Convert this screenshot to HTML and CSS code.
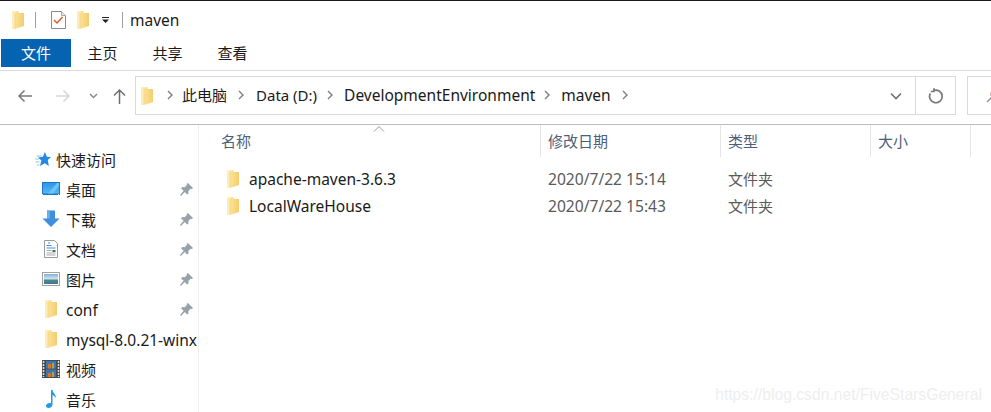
FILE: index.html
```html
<!DOCTYPE html>
<html lang="en">
<head>
    <meta charset="UTF-8">
    <meta name="viewport" content="width=device-width, initial-scale=1.0">
    <title>maven</title>
    <link rel="stylesheet" href="styles.css">
</head>
<body>
    <svg class="defs" width="0" height="0">
        <defs>
            <linearGradient id="folder-fill" x1="0" y1="0" x2="1" y2="0">
                <stop offset="0" stop-color="#fde9a8"/>
                <stop offset="1" stop-color="#f4cd6c"/>
            </linearGradient>
            <linearGradient id="desk-fill" x1="0" y1="0" x2="0" y2="1">
                <stop offset="0" stop-color="#2f95e8"/>
                <stop offset="1" stop-color="#54b8f6"/>
            </linearGradient>
            <linearGradient id="pic-fill" x1="0" y1="0" x2="0" y2="1">
                <stop offset="0" stop-color="#7fb2d8"/>
                <stop offset=".5" stop-color="#d2e4ee"/>
                <stop offset=".6" stop-color="#4f8a7c"/>
                <stop offset="1" stop-color="#3a78a8"/>
            </linearGradient>
            <symbol id="folder" viewBox="0 0 12 18">
                <path d="M0 0h6l1 2h5v13L3 18H0z" fill="url(#folder-fill)"/>
                <path d="M0 0h5.500L3 2v14l-1 2H0z" fill="#fdedb6"/>
                <path d="M3 2v15" stroke="#efcf7e" stroke-width=".6"/>
            </symbol>
            <symbol id="pin" viewBox="0 0 14 14">
                <path d="M8.500 0L14 5.500l-1.200 1-1.300-.4-2.500 2.500.2 2.700-1.500 1.200-2.600-2.700L1 14l-1-1 3.900-4.600L1.200 5.800l1.200-1.500 2.700.2 2.500-2.500-.4-1.300z" fill="#98a2ab"/>
            </symbol>
        </defs>
    </svg>

    <div class="titlebar">
        <svg class="icon-folder"><use href="#folder"/></svg>
        <span class="title-sep sep-first"></span>
        <svg class="icon-check" viewBox="0 0 15 18">
            <path d="M.5.5h10l4 4v13H.5z" fill="#fff" stroke="#8c8c8c"/>
            <path d="M10.500.5v4h4" fill="#e8e8e8" stroke="#a8a8a8"/>
            <path d="M3 9l3 3 5.500-6" fill="none" stroke="#e4562a" stroke-width="1.500"/>
        </svg>
        <svg class="icon-folder folder-qat"><use href="#folder"/></svg>
        <svg class="icon-drop" viewBox="0 0 7 6">
            <path d="M0 0h7v1H0zM0 2.500h7L3.500 6z" fill="#222"/>
        </svg>
        <span class="title-sep sep-last"></span>
        <span class="title-text">maven</span>
    </div>

    <div class="tabs">
        <div class="tab tab-file">文件</div>
        <div class="tab">主页</div>
        <div class="tab">共享</div>
        <div class="tab">查看</div>
    </div>

    <div class="navbar">
        <div class="nav-buttons">
            <svg class="nav-arrow" viewBox="0 0 16 14"><path d="M15 7H2M7.500 1.500L2 7l5.500 5.500" fill="none" stroke="#7a7a7a" stroke-width="1.500"/></svg>
            <svg class="nav-arrow nav-fwd" viewBox="0 0 16 14"><path d="M1 7h13M8.500 1.500L14 7l-5.500 5.500" fill="none" stroke="#d6d6d6" stroke-width="1.500"/></svg>
            <svg class="nav-recent" viewBox="0 0 9 6"><path d="M1 1l3.500 3.500L8 1" fill="none" stroke="#8a8a8a" stroke-width="1.500"/></svg>
            <svg class="nav-up" viewBox="0 0 13 16"><path d="M6.500 16V2M1 7.500L6.500 2 12 7.500" fill="none" stroke="#6f6f6f" stroke-width="1.500"/></svg>
        </div>
        <div class="address">
            <svg class="icon-folder"><use href="#folder"/></svg>
            <div class="crumbs">
                <svg class="chev" viewBox="0 0 6 10"><path d="M1 1l4 4-4 4" fill="none" stroke="#7d7d7d" stroke-width="1.400"/></svg>
                <span class="crumb-cjk">此电脑</span>
                <svg class="chev" viewBox="0 0 6 10"><path d="M1 1l4 4-4 4" fill="none" stroke="#7d7d7d" stroke-width="1.400"/></svg>
                <span class="crumb-data">Data (D:)</span>
                <svg class="chev" viewBox="0 0 6 10"><path d="M1 1l4 4-4 4" fill="none" stroke="#7d7d7d" stroke-width="1.400"/></svg>
                <span class="crumb-dev">DevelopmentEnvironment</span>
                <svg class="chev" viewBox="0 0 6 10"><path d="M1 1l4 4-4 4" fill="none" stroke="#7d7d7d" stroke-width="1.400"/></svg>
                <span>maven</span>
                <svg class="chev" viewBox="0 0 6 10"><path d="M1 1l4 4-4 4" fill="none" stroke="#7d7d7d" stroke-width="1.400"/></svg>
            </div>
            <div class="addr-drop">
                <svg viewBox="0 0 12 8" width="12" height="8"><path d="M1 1.500l5 5 5-5" fill="none" stroke="#6e6e6e" stroke-width="1.600"/></svg>
            </div>
            <div class="addr-refresh">
                <svg viewBox="0 0 16 16" width="16" height="16"><path d="M5.500 2.600A6.300 6.300 0 1 1 2.300 5.500M6 .2v3.300H2.800" fill="none" stroke="#777" stroke-width="1.700"/></svg>
            </div>
        </div>
        <div class="search">
            <svg viewBox="0 0 14 14" width="14" height="14"><circle cx="9" cy="5" r="4" fill="none" stroke="#b3917c" stroke-width="1.300"/><path d="M6 8l-5 5" stroke="#8c8f9c" stroke-width="1.300"/></svg>
        </div>
    </div>

    <div class="main">
        <aside class="sidebar">
            <div class="side-head">
                <svg class="side-star" viewBox="0 0 16 15"><path d="M10 0l1.800 4.800 4.200.3-3.200 3 1 5.900-4-2.700L5 14l1.400-5.400L3 5.500l4.800-.7z" fill="#2489e0"/><path d="M1.500 4h5M0 7h4M.5 10h4M2 13h2.500" stroke="#8fc3ef"/></svg>
                <span>快速访问</span>
            </div>
            <div class="side-item">
                <svg class="side-icon" viewBox="0 0 18 14"><rect width="18" height="13" fill="#1b76c8"/><rect x="1" y="1" width="16" height="10.500" fill="url(#desk-fill)"/><path d="M6 11.500L15 1h2v3l-6 7.500z" fill="#6cc4f8"/><path d="M0 12.500h18" stroke="#d6ecfb" stroke-dasharray="1 15"/></svg>
                <span class="side-label">桌面</span>
                <svg class="pin"><use href="#pin"/></svg>
            </div>
            <div class="side-item">
                <svg class="side-icon" viewBox="0 0 18 18"><path d="M5 .5h8v8h4.500L9 17 .5 8.500H5z" fill="#3f8fdc"/><path d="M5 .5h3v8H5z" fill="#6aaee8"/></svg>
                <span class="side-label">下载</span>
                <svg class="pin"><use href="#pin"/></svg>
            </div>
            <div class="side-item">
                <svg class="side-icon" viewBox="0 0 18 18"><path d="M2.500.5h10l3 3v14h-13z" fill="#fff" stroke="#9a9a9a"/><path d="M6 3h2M4.500 5.500h5M4.500 8h9" stroke="#3f8fdc"/><path d="M4.500 10.500h5M4.500 13h9M4.500 15h9" stroke="#a9a9a9"/><path d="M10.500 10h3v2h-3z" fill="#44705e"/></svg>
                <span class="side-label">文档</span>
                <svg class="pin"><use href="#pin"/></svg>
            </div>
            <div class="side-item">
                <svg class="side-icon" viewBox="0 0 18 14"><rect x=".5" y=".5" width="17" height="13" fill="#fff" stroke="#a0a0a0"/><rect x="2" y="2" width="14" height="10" fill="url(#pic-fill)"/></svg>
                <span class="side-label">图片</span>
                <svg class="pin"><use href="#pin"/></svg>
            </div>
            <div class="side-item">
                <svg class="side-icon icon-folder"><use href="#folder"/></svg>
                <span class="side-label side-latin">conf</span>
                <svg class="pin"><use href="#pin"/></svg>
            </div>
            <div class="side-item">
                <svg class="side-icon icon-folder"><use href="#folder"/></svg>
                <span class="side-label side-latin">mysql-8.0.21-winx</span>
            </div>
            <div class="side-item">
                <svg class="side-icon" viewBox="0 0 18 18"><rect width="18" height="18" fill="#4a4a4a"/><path d="M1.500 1v16M16.500 1v16" stroke="#ddd" stroke-width="1.500" stroke-dasharray="2 1"/><rect x="4" y="1" width="10" height="7.500" fill="#3f74b8"/><rect x="4" y="9.500" width="10" height="7.500" fill="#3f74b8"/><path d="M6 4h3v4.500H6zM6 13h3v4H6z" fill="#d2772e"/><path d="M10 3h2v5.500h-2zM10 12h2v5h-2z" fill="#b8a33a"/></svg>
                <span class="side-label">视频</span>
            </div>
            <div class="side-item">
                <svg class="side-icon" viewBox="0 0 18 18"><path d="M9 0h1.500c.3 3 3.500 4 3.500 8-1-1.500-2-2.500-3.500-3v9.500c0 2-2 3.500-4 3.500-1.500 0-2.500-1-2.500-2 0-2 2.500-3.200 5-2.800z" fill="#1e9be8"/></svg>
                <span class="side-label">音乐</span>
            </div>
        </aside>

        <section class="files">
            <div class="file-head">
                <svg class="sort-arrow" viewBox="0 0 12 6"><path d="M1 5.500l5-5 5 5" fill="none" stroke="#9a9a9a"/></svg>
                <div class="col col-name">名称</div>
                <div class="col col-date">修改日期</div>
                <div class="col col-type">类型</div>
                <div class="col col-size">大小</div>
            </div>
            <div class="file-row">
                <div class="cell-name"><svg class="icon-folder"><use href="#folder"/></svg><span>apache-maven-3.6.3</span></div>
                <div class="cell cell-date">2020/7/22 15:14</div>
                <div class="cell">文件夹</div>
            </div>
            <div class="file-row">
                <div class="cell-name"><svg class="icon-folder"><use href="#folder"/></svg><span>LocalWareHouse</span></div>
                <div class="cell cell-date">2020/7/22 15:43</div>
                <div class="cell">文件夹</div>
            </div>
        </section>
    </div>

    <div class="watermark">https://blog.csdn.net/FiveStarsGeneral</div>
</body>
</html>
```

FILE: styles.css
```css
* {
    box-sizing: border-box;
}
body {
    margin: 0;
    width: 991px;
    height: 412px;
    overflow: hidden;
    position: relative;
    background-color: white;
    color: #1a1a1a;
    font-family: "Noto Sans", "Noto Sans CJK SC", sans-serif;
    font-size: 15px;
    border-top: 1px solid #1a1a1a;
}
svg {
    display: block;
    flex: none;
}
.defs {
    position: absolute;
}
.icon-folder {
    width: 12px;
    height: 18px;
}

/* title bar */
.titlebar {
    display: flex;
    align-items: center;
    height: 38px;
    padding-left: 12px;
}
.title-sep {
    width: 1px;
    height: 16px;
    background-color: #a0a0a0;
}
.sep-first {
    margin-left: 11px;
}
.icon-check {
    width: 15px;
    height: 18px;
    margin-left: 15px;
}
.folder-qat {
    margin-left: 11px;
}
.icon-drop {
    width: 7px;
    height: 6px;
    margin-left: 13px;
}
.sep-last {
    margin-left: 13px;
}
.title-text {
    margin-left: 7px;
    font-size: 15.5px;
}

/* ribbon tabs */
.tabs {
    display: flex;
    height: 32px;
    padding-left: 1px;
    border-bottom: 1px solid #dadada;
}
.tab {
    width: 65px;
    height: 28px;
    line-height: 29px;
    text-align: center;
}
.tab-file {
    width: 70px;
    margin-right: -1px;
    background-color: #0563b1;
    color: white;
}

/* navigation row */
.navbar {
    display: flex;
    height: 54px;
    padding-top: 5px;
    border-bottom: 1px solid #bdbdbd;
}
.nav-buttons {
    display: flex;
    flex: none;
    align-items: center;
    width: 135px;
    height: 39px;
    padding-left: 17px;
}
.nav-arrow {
    width: 16px;
    height: 14px;
}
.nav-fwd {
    margin-left: 22px;
}
.nav-recent {
    width: 9px;
    height: 6px;
    margin-left: 18px;
}
.nav-up {
    width: 13px;
    height: 16px;
    margin-left: 15px;
}
.address {
    display: flex;
    flex: none;
    align-items: center;
    width: 821px;
    height: 39px;
    padding-left: 5px;
    border: 1px solid #d9d9d9;
}
.crumbs {
    display: flex;
    align-items: center;
    flex: 1;
    margin-left: 14px;
    margin-top: -2px;
    font-size: 15.5px;
}
.crumbs span {
    margin: 0 11px;
}
.crumbs .crumb-cjk {
    margin-left: 9px;
    font-size: 15px;
}
.crumbs .crumb-data {
    margin-left: 12px;
    margin-right: 10px;
    font-size: 15px;
}
.crumbs .crumb-dev {
    margin-right: 9px;
}
.chev {
    width: 6px;
    height: 10px;
}
.addr-drop {
    display: flex;
    align-items: center;
    justify-content: center;
    width: 39px;
    height: 100%;
    border-right: 1px solid #d9d9d9;
}
.addr-refresh {
    display: flex;
    align-items: center;
    justify-content: center;
    width: 39px;
}
.search {
    display: flex;
    flex: none;
    align-items: center;
    width: 24px;
    height: 39px;
    margin-left: 11px;
    padding-left: 18px;
    border: 1px solid #d9d9d9;
    border-right: none;
}

/* left pane */
.main {
    display: flex;
    height: 287px;
}
.sidebar {
    flex: none;
    width: 199px;
    height: 287px;
    overflow: hidden;
    padding-top: 19px;
    border-right: 1px solid #eeeeee;
}
.side-head {
    display: flex;
    align-items: center;
    height: 30px;
    padding-left: 35px;
}
.side-star {
    width: 16px;
    height: 15px;
    margin-right: 5px;
}
.side-item {
    display: flex;
    align-items: center;
    height: 30px;
    padding-left: 42px;
    position: relative;
}
.side-icon {
    width: 18px;
    height: 18px;
}
.side-icon.icon-folder {
    width: 12px;
    margin-left: 3px;
    margin-right: 3px;
}
.side-label {
    margin-left: 6px;
    white-space: nowrap;
}
.side-latin {
    margin-top: 2px;
    font-size: 15.5px;
}
.pin {
    position: absolute;
    left: 180px;
    top: 9px;
    width: 13px;
    height: 13px;
}

/* file list */
.files {
    flex: 1;
    position: relative;
}
.file-head {
    display: flex;
    height: 32px;
    margin-left: 15px;
    margin-bottom: 8px;
    color: #4c607a;
}
.sort-arrow {
    position: absolute;
    left: 174px;
    top: 1px;
    width: 12px;
    height: 6px;
}
.col {
    height: 32px;
    line-height: 33px;
    padding-left: 7px;
    border-right: 1px solid #e5e5e5;
}
.col-name {
    width: 327px;
}
.col-date {
    width: 180px;
}
.col-type {
    width: 150px;
}
.col-size {
    width: 100px;
}
.file-row {
    display: flex;
    align-items: center;
    height: 27px;
    margin-left: 15px;
    font-size: 15.5px;
}
.cell-name {
    display: flex;
    align-items: center;
    gap: 10px;
    width: 327px;
    padding-left: 13px;
}
.cell {
    color: #5a5a5a;
    padding-left: 7px;
    font-size: 15px;
}
.cell-date {
    width: 180px;
    font-size: 15.6px;
}
.watermark {
    position: absolute;
    right: 9px;
    bottom: 8px;
    color: #eeeeee;
    font-family: "Liberation Sans", sans-serif;
    font-size: 15.7px;
}
```
